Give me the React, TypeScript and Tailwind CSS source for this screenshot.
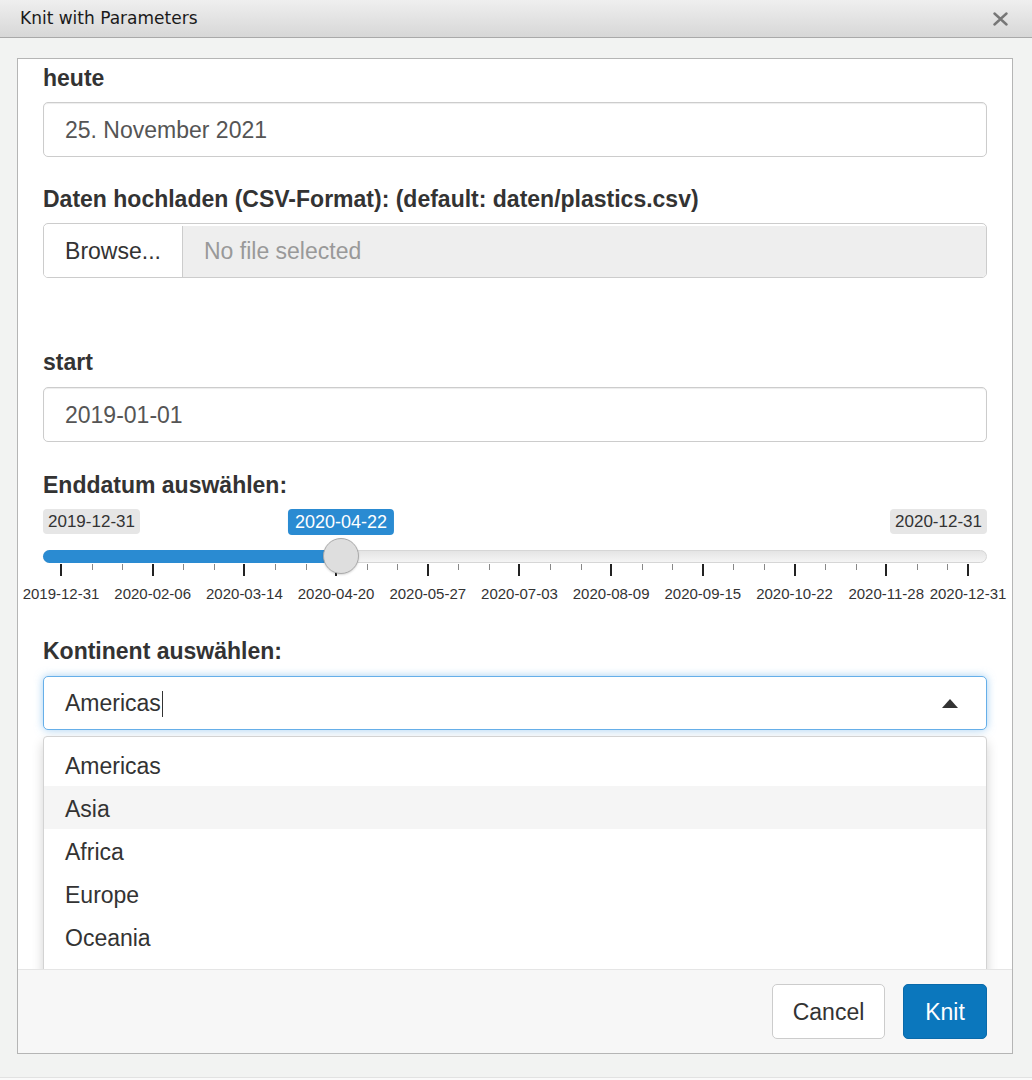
import React from "react"

const DAYS = 366
const GRID_L = 18
const GRID_W = 907
const VALUE = 113

const majors = [
	{ d: 0, label: "2019-12-31" },
	{ d: 37, label: "2020-02-06" },
	{ d: 74, label: "2020-03-14" },
	{ d: 111, label: "2020-04-20" },
	{ d: 148, label: "2020-05-27" },
	{ d: 185, label: "2020-07-03" },
	{ d: 222, label: "2020-08-09" },
	{ d: 259, label: "2020-09-15" },
	{ d: 296, label: "2020-10-22" },
	{ d: 333, label: "2020-11-28" },
	{ d: 366, label: "2020-12-31" }
]

const pos = (d: number) => GRID_L + (d / DAYS) * GRID_W

function Label({ children, mb = "mb-[10px]" }: { children: React.ReactNode; mb?: string }) {
	return <div className={"text-[23px] font-bold leading-[28px] text-[#333] " + mb}>{children}</div>
}

function TextInput({ value }: { value: string }) {
	return (
		<div className="flex h-[55px] items-center rounded-[5px] border border-[#ccc] bg-white px-[21px] pt-[2px] text-[23px] text-[#555] shadow-[inset_0_1px_1px_rgba(0,0,0,0.075)]">
			{value}
		</div>
	)
}

function Slider() {
	const minor: number[] = []
	for (let i = 0; i < majors.length - 1; i++) {
		const a = majors[i].d
		const step = 37 / 3
		minor.push(a + step, a + step * 2)
	}
	const v = pos(VALUE)
	return (
		<div className="relative h-[94px] w-full">
			<span className="absolute left-0 top-0 rounded-[4px] bg-[#e6e6e6] px-[5px] text-[17px] leading-[25px] text-[#333]">
				2019-12-31
			</span>
			<span className="absolute right-0 top-0 rounded-[4px] bg-[#e6e6e6] px-[5px] text-[17px] leading-[25px] text-[#333]">
				2020-12-31
			</span>
			<span
				className="absolute top-0 -translate-x-1/2 rounded-[4px] bg-[#2a8bd2] px-[7px] text-[18px] leading-[26px] text-white"
				style={{ left: v }}>
				2020-04-22
			</span>
			<div className="absolute left-0 right-0 top-[41px] h-[13px] rounded-full border border-[#d6d6d6] bg-gradient-to-b from-[#e4e4e4] to-[#f5f5f5]" />
			<div className="absolute left-0 top-[41px] h-[13px] rounded-l-full bg-[#2a8bd2]" style={{ width: v }} />
			{majors.map((m) => (
				<div key={m.d} className="absolute top-[55px] h-[12px] w-[2px] bg-[#222]" style={{ left: pos(m.d) - 1 }} />
			))}
			{minor.map((d, i) => (
				<div key={i} className="absolute top-[55px] h-[6px] w-px bg-[#888]" style={{ left: pos(d) }} />
			))}
			{majors.map((m) => (
				<span
					key={m.label + m.d}
					className="absolute top-[76px] -translate-x-1/2 whitespace-nowrap text-[15px] leading-[18px] text-[#333]"
					style={{ left: pos(m.d) }}>
					{m.label}
				</span>
			))}
			<div
				className="absolute top-[29px] h-[36px] w-[36px] -translate-x-1/2 rounded-full border-[1.5px] border-[#aaa] bg-[#dedede] shadow-[0_1px_2px_rgba(0,0,0,0.15)]"
				style={{ left: v }}
			/>
		</div>
	)
}

export default function App() {
	const options = ["Americas", "Asia", "Africa", "Europe", "Oceania"]

	return (
		<div
			className="flex h-[1080px] w-[1032px] flex-col overflow-hidden bg-[#f2f3f2]"
			style={{ fontFamily: '"Liberation Sans", Arial, sans-serif' }}>
			{/* title bar */}
			<div className="flex h-[38px] shrink-0 items-center justify-between border-b border-[#a9a9a9] bg-gradient-to-b from-[#efefef] to-[#d7d7d7] pl-[20px] pr-[24px]">
				<span className="text-[17px] text-[#1a1a1a]" style={{ fontFamily: '"DejaVu Sans", sans-serif' }}>
					Knit with Parameters
				</span>
				<svg width="15" height="14" viewBox="0 0 15 14">
					<path d="M1.5 1.5 L13.5 12.5 M13.5 1.5 L1.5 12.5" stroke="#777" strokeWidth="2.4" strokeLinecap="round" />
				</svg>
			</div>

			<div className="pl-[17px] pr-[19px] pt-[20px]">
				<div className="flex h-[996px] flex-col border border-[#b5b5b5] bg-white">
					<div className="relative flex-1 overflow-hidden px-[25px] pt-[5px]">
						<Label>heute</Label>
						<TextInput value="25. November 2021" />

						<div className="mt-[28px]">
							<Label>Daten hochladen (CSV-Format): (default: daten/plastics.csv)</Label>
						</div>
						<div className="flex h-[55px] overflow-hidden rounded-[5px] border border-[#ccc] pt-[2px] text-[23px]">
							<div className="flex w-[139px] items-center justify-center border-r border-[#ccc] bg-white text-[#333]">
								Browse...
							</div>
							<div className="flex flex-1 items-center bg-[#eee] px-[21px] text-[#999]">No file selected</div>
						</div>

						<div className="mt-[70px]">
							<Label mb="mb-[11px]">start</Label>
						</div>
						<TextInput value="2019-01-01" />

						<div className="mt-[29px]">
							<Label>Enddatum auswählen:</Label>
						</div>
						<Slider />

						<div className="mt-[34px]">
							<Label mb="mb-[11px]">Kontinent auswählen:</Label>
						</div>
						<div className="relative">
							<div className="flex h-[54px] items-center justify-between rounded-[5px] border border-[#66afe9] bg-white pl-[21px] pr-[28px] pt-[1px] text-[23px] text-[#333] shadow-[0_0_8px_rgba(102,175,233,0.6)]">
								<span className="flex items-center">
									Americas
									<span className="ml-px inline-block h-[26px] w-px bg-[#333]" />
								</span>
								<svg width="16" height="9" viewBox="0 0 16 9">
									<path d="M0 9 L8 0 L16 9 Z" fill="#333" />
								</svg>
							</div>
							<div className="absolute left-0 right-0 top-[60px] h-[300px] rounded-t-[4px] border border-[#d3d3d3] bg-white pt-[6px] shadow-[0_6px_12px_rgba(0,0,0,0.175)]">
								{options.map((o) => (
									<div
										key={o}
										className={
											"flex h-[43px] items-center px-[21px] pt-[3px] text-[23px] text-[#333] " +
											(o === "Asia" ? "bg-[#f5f5f5]" : "")
										}>
										{o}
									</div>
								))}
							</div>
						</div>
					</div>

					<div className="flex h-[84px] shrink-0 items-center justify-end gap-[18px] border-t border-[#e5e5e5] bg-[#f7f7f7] pr-[25px]">
						<button className="h-[55px] w-[113px] rounded-[5px] border border-[#ccc] bg-white pt-[2px] text-[23px] text-[#333]">
							Cancel
						</button>
						<button className="h-[55px] w-[84px] rounded-[5px] border border-[#0a6aaa] bg-[#0b77bd] pt-[2px] text-[23px] text-white">
							Knit
						</button>
					</div>
				</div>
			</div>
			<div className="mt-auto h-[3px] border-t border-[#e2e2e2] bg-[#fafafa]" />
		</div>
	)
}
